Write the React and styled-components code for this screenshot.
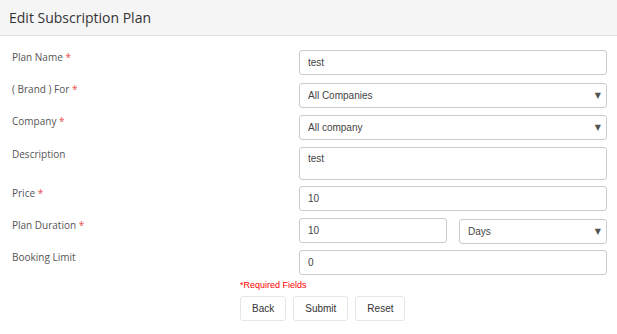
import React from 'react'
import styled, { createGlobalStyle } from 'styled-components'

const GlobalStyle = createGlobalStyle`
  body {
    margin: 0;
    background: #fff;
    font-family: "Open Sans", "Liberation Sans", sans-serif;
  }
`

const fields = [
  { label: 'Plan Name', required: true, type: 'input', value: 'test' },
  { label: '( Brand ) For', required: true, type: 'select', value: 'All Companies' },
  { label: 'Company', required: true, type: 'select', value: 'All company' },
  { label: 'Description', type: 'textarea', value: 'test' },
  { label: 'Price', required: true, type: 'input', value: '10' },
  { label: 'Plan Duration', required: true, type: 'duration', value: '10', unit: 'Days' },
  { label: 'Booking Limit', type: 'input', value: '0' },
]

const App = () => {
  const renderControl = (f) => {
    if (f.type === 'select') {
      return (
        <SelectWrap>
          <Select defaultValue={f.value}>
            <option>{f.value}</option>
          </Select>
          <Arrow>▼</Arrow>
        </SelectWrap>
      )
    }
    if (f.type === 'textarea') return <TextArea defaultValue={f.value} />
    if (f.type === 'duration') {
      return (
        <Split>
          <Input defaultValue={f.value} />
          <SelectWrap>
            <Select defaultValue={f.unit}>
              <option>{f.unit}</option>
            </Select>
            <Arrow>▼</Arrow>
          </SelectWrap>
        </Split>
      )
    }
    return <Input defaultValue={f.value} />
  }

  return (
    <Page>
      <GlobalStyle />
      <Header>
        <Title>Edit Subscription Plan</Title>
      </Header>
      <Form>
        {fields.map((f) => (
          <React.Fragment key={f.label}>
            <Label>
              {f.label}
              {f.required && <Star> *</Star>}
            </Label>
            {renderControl(f)}
          </React.Fragment>
        ))}
      </Form>
      <Footer>
        <Required>*Required Fields</Required>
        <Buttons>
          <Button>Back</Button>
          <Button>Submit</Button>
          <Button>Reset</Button>
        </Buttons>
      </Footer>
    </Page>
  )
}

const Page = styled.div`
  width: 617px;
  min-height: 334px;
`
const Header = styled.div`
  height: 35px;
  background: #f5f5f5;
  border-bottom: 1px solid #e0e0e0;
  display: flex;
  align-items: center;
  padding-left: 9px;
`
const Title = styled.h1`
  margin: 0;
  font-size: 14px;
  font-weight: 400;
  color: #333;
`
const Form = styled.div`
  display: grid;
  grid-template-columns: 1fr 308px;
  row-gap: 6.5px;
  padding: 14px 10px 0 12px;
`
const Label = styled.div`
  font-size: 10px;
  color: #555;
  line-height: 14px;
`
const Star = styled.span`
  color: #e84c4c;
`
const controlBase = `
  box-sizing: border-box;
  width: 100%;
  border: 1px solid #ccc;
  border-radius: 3px;
  background: #fff;
  font-family: "Liberation Sans", Arial, sans-serif;
  font-size: 10px;
  color: #444;
  padding: 0 8px;
  outline: none;
`
const Input = styled.input`
  ${controlBase}
  height: 25px;
`
const TextArea = styled.textarea`
  ${controlBase}
  height: 33px;
  padding-top: 5px;
  resize: none;
  display: block;
`
const SelectWrap = styled.div`
  position: relative;
`
const Select = styled.select`
  ${controlBase}
  height: 25px;
  appearance: none;
  -webkit-appearance: none;
`
const Arrow = styled.span`
  position: absolute;
  right: 6px;
  top: 50%;
  transform: translateY(-50%);
  font-size: 8px;
  color: #555;
  pointer-events: none;
  font-family: "DejaVu Sans", sans-serif;
`
const Split = styled.div`
  display: grid;
  grid-template-columns: 148px 148px;
  justify-content: space-between;
`
const Footer = styled.div`
  padding: 3px 0 0 240px;
`
const Required = styled.div`
  font-family: "Liberation Sans", Arial, sans-serif;
  font-size: 9px;
  color: #f00;
  line-height: 14px;
`
const Buttons = styled.div`
  display: flex;
  gap: 7px;
  margin-top: 4px;
`
const Button = styled.button`
  height: 25px;
  padding: 0 11px;
  background: #fff;
  border: 1px solid #e6e6e6;
  border-radius: 3px;
  font-family: "Liberation Sans", Arial, sans-serif;
  font-size: 10px;
  color: #333;
`

export default App
